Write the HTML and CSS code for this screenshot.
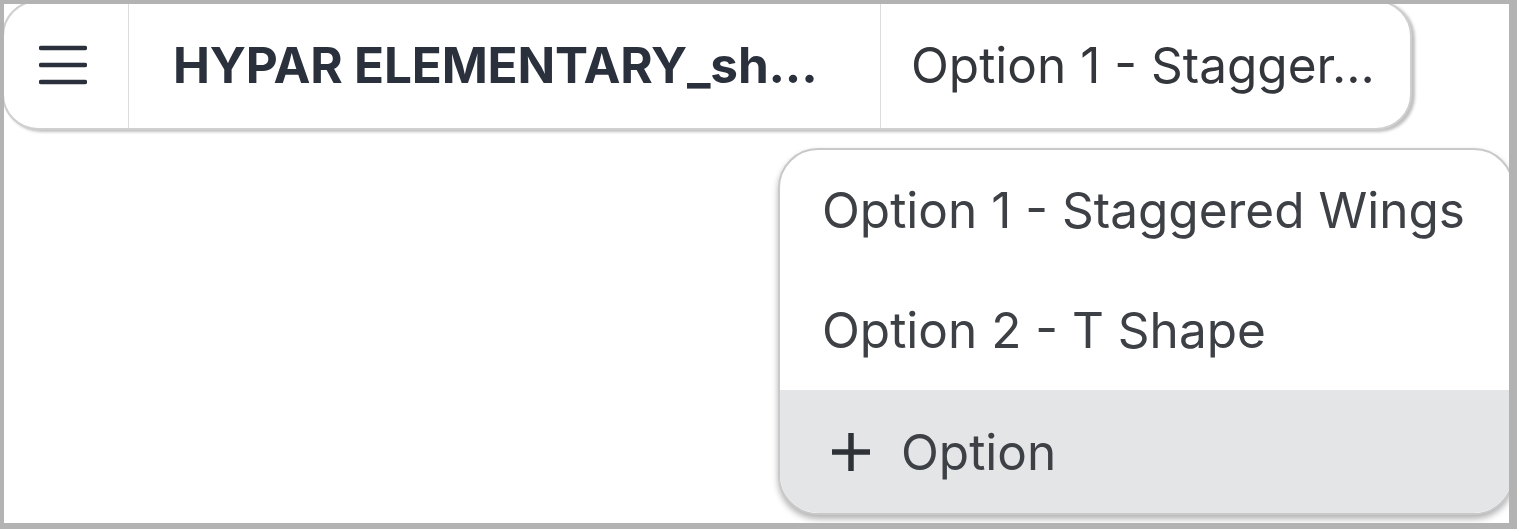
FILE: index.html
```html
<!DOCTYPE html>
<html lang="en">
<head>
    <meta charset="UTF-8">
    <meta name="viewport" content="width=device-width, initial-scale=1.0">
    <title>Hypar - Options</title>
    <link rel="stylesheet" href="styles.css">
</head>
<body>

    <div class="frame">
        <!-- top toolbar -->
        <div class="topbar">
            <button class="menu-btn" aria-label="Menu">
                <svg width="48" height="42" viewBox="0 0 48 42">
                    <path d="M2 4H46M2 21H46M2 38H46" stroke="#2b313c" stroke-width="4.5" stroke-linecap="round"/>
                </svg>
            </button>
            <div class="project-name">HYPAR ELEMENTARY_sh...</div>
            <div class="option-name">Option 1 - Stagger...</div>
        </div>

        <!-- option dropdown -->
        <ul class="dropdown">
            <li class="dropdown-item">Option 1 - Staggered Wings</li>
            <li class="dropdown-item">Option 2 - T Shape</li>
            <li class="dropdown-item add-option">
                <svg width="42" height="42" viewBox="0 0 42 42">
                    <path d="M21 2V40M2 21H40" stroke="#2f3237" stroke-width="5.5"/>
                </svg>
                Option
            </li>
        </ul>
    </div>

</body>
</html>
```

FILE: styles.css
```css
* { box-sizing: border-box; }
body { margin: 0; font-family: Inter, "Noto Sans", sans-serif; background: #fff; }

.frame {
    position: relative; width: 1517px; height: 529px; overflow: hidden;
    border: solid #b3b3b3; border-width: 4px 8px 6px 4px; background: #fff;
}

.topbar {
    display: flex; align-items: stretch; width: 1410px; height: 130px;
    margin: -4px 0 0 -2px; background: #fff;
    border: 2px solid #cfcfcf; border-radius: 36px;
    box-shadow: 3px 2px 3px rgba(0, 0, 0, 0.25);
}
.menu-btn {
    width: 125px; border: none; background: none; padding: 0 6px 0 0;
    display: flex; align-items: center; justify-content: center;
    border-right: 1px solid #dcdcdc;
}
.project-name {
    display: flex; align-items: center; width: 752px; padding-left: 44px;
    font-size: 49.5px; font-weight: 700; color: #2b313c; letter-spacing: -0.2px;
    border-right: 1px solid #dcdcdc;
}
.option-name {
    display: flex; align-items: center; padding-left: 30px;
    font-size: 49.5px; color: #33363b;
}

.dropdown {
    position: absolute; top: 144px; left: 774px; width: 736px;
    margin: 0; padding: 0; list-style: none; background: #fff; overflow: hidden;
    border: 2px solid #c9c9c9; border-radius: 40px;
    box-shadow: 0 4px 6px rgba(0, 0, 0, 0.3);
}
.dropdown-item {
    display: flex; align-items: center; gap: 29px; height: 120px; padding-left: 42px;
    font-size: 49.5px; color: #3d4045;
}
.add-option { background: #e3e5e7; height: 123px; padding-left: 50px; }
```
